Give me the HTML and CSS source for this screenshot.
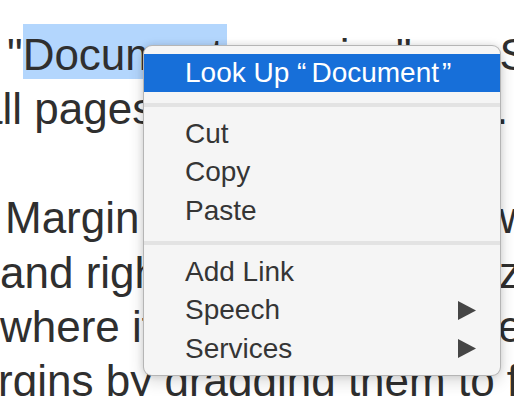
FILE: index.html
```html
<!DOCTYPE html>
<html>
<head>
<meta charset="utf-8">
<link rel="stylesheet" href="styles.css">
</head>
<body>
<div class="page">
  <div class="doc">
    <div class="line l1">"<span class="sel">Document</span> margins" are Set the</div>
    <div class="line split l2"><span class="a">all pages in this document</span><span class="b">.</span></div>
    <div class="line l3">&nbsp;</div>
    <div class="line split l4"><span class="a">Margin  set the top and bottom</span><span class="b">width</span></div>
    <div class="line split l5"><span class="a">and right margins, the hori</span><span class="b">zontal</span></div>
    <div class="line split l6"><span class="a">where it appears in the text ar</span><span class="b">ea</span></div>
    <div class="line l7">margins by dragging them to fit</div>
  </div>
  <div class="menu">
    <div class="item active"><span class="label">Look Up <span class="q ql">“</span>Document<span class="q qr">”</span></span></div>
    <div class="sep"></div>
    <div class="item"><span class="label">Cut</span></div>
    <div class="item"><span class="label">Copy</span></div>
    <div class="item"><span class="label">Paste</span></div>
    <div class="sep"></div>
    <div class="item"><span class="label">Add Link</span></div>
    <div class="item sub"><span class="label">Speech</span><svg class="arrow" width="18" height="19" viewBox="0 0 18 19"><polygon points="0,0 18,9.5 0,19"/></svg></div>
    <div class="item sub"><span class="label">Services</span><svg class="arrow" width="18" height="19" viewBox="0 0 18 19"><polygon points="0,0 18,9.5 0,19"/></svg></div>
  </div>
</div>
</body>
</html>
```
FILE: styles.css
```css
html, body {
  margin: 0;
  padding: 0;
  background: #ffffff;
}
.page {
  position: relative;
  width: 514px;
  height: 396px;
  overflow: hidden;
  background: #ffffff;
}
.doc {
  padding-top: 28px;
  font-family: "Liberation Sans", Arial, sans-serif;
  font-size: 44px;
  line-height: 54.4px;
  color: #2f2f2f;
  white-space: nowrap;
}
.line {
  height: 54.4px;
}
.sel {
  background: #b3d6fd;
  padding-top: 6px;
  padding-right: 4px;
}
.l1 { margin-left: 7px; }
.l2 { margin-left: -22px; }
.l4 { margin-left: 5px; }
.l5 { margin-left: 0; }
.l6 { margin-left: 0; }
.l7 { margin-left: -63px; }
.split {
  display: grid;
}
.split .a {
  overflow: hidden;
}
.l2 { grid-template-columns: 518px max-content; }
.l4 { grid-template-columns: 494px max-content; }
.l5 { grid-template-columns: 499px max-content; }
.l6 { grid-template-columns: 498px max-content; }

.menu {
  position: absolute;
  left: 143px;
  top: 45px;
  width: 358px;
  height: 331px;
  box-sizing: border-box;
  padding-top: 7.5px;
  background: #f5f5f5;
  border: 1px solid rgba(0, 0, 0, 0.26);
  border-radius: 9px;
  box-shadow: 0 0 7px rgba(0, 0, 0, 0.12), 0 6px 16px rgba(0, 0, 0, 0.14);
  font-family: "Liberation Sans", Arial, sans-serif;
  font-size: 28px;
  color: #353535;
}
.item {
  height: 38.5px;
  line-height: 38.5px;
  padding-left: 41px;
  padding-right: 24px;
  display: flex;
  align-items: center;
  white-space: nowrap;
}
.label {
  white-space: pre;
}
.item.sub {
  justify-content: space-between;
}
.item.active {
  background: #176fd9;
  color: #ffffff;
}
.ql { margin-right: 5px; }
.qr { margin-left: 3px; }
.arrow {
  display: block;
  fill: #454545;
}
.sep {
  height: 4px;
  margin: 10.5px 0 8px;
  background: #e3e3e3;
}
```
